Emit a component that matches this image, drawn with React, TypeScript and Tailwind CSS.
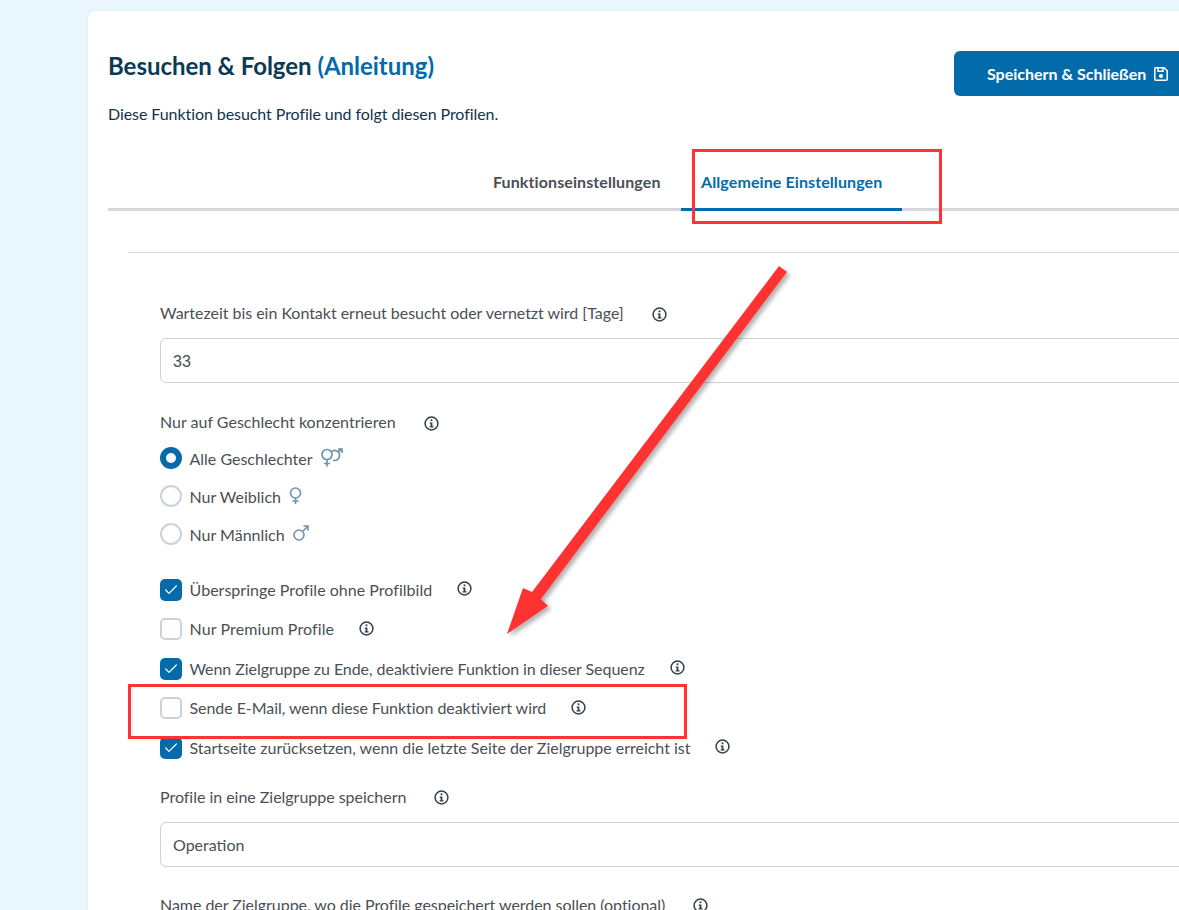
import { Check } from "lucide-react";

function InfoIcon({ shift }: { shift: string }) {
  return (
    <svg width="15" height="15" viewBox="0 0 15 15" fill="none" className={`shrink-0 text-[#333f48] ${shift}`}>
      <circle cx="7.5" cy="7.5" r="6.4" stroke="currentColor" strokeWidth="1.5" />
      <rect x="6.6" y="3.4" width="1.8" height="1.8" fill="currentColor" />
      <path d="M5.7 6.4h2.7v3.8h1.1v1.3H5.6v-1.3h1v-2.5h-.9z" fill="currentColor" />
    </svg>
  );
}

function SaveIcon() {
  return (
    <svg width="16" height="16" viewBox="0 0 16 16" fill="none" stroke="currentColor" strokeWidth="1.5" className="shrink-0">
      <path d="M2.8 1.8h8.4l3 3v8.4a1 1 0 0 1-1 1H2.8a1 1 0 0 1-1-1V2.8a1 1 0 0 1 1-1z" />
      <path d="M5 2v3.2h5V2" />
      <circle cx="8" cy="10" r="1.3" fill="currentColor" />
    </svg>
  );
}

function VenusMarsIcon() {
  return (
    <svg width="22" height="19" viewBox="0 0 22 19" fill="none" stroke="currentColor" strokeWidth="1.7">
      <circle cx="6" cy="6.5" r="5" />
      <path d="M6 11.5v7M3 15.5h6" />
      <path d="M11 3.2a5 5 0 1 1 1 9" />
      <path d="M17 4l4-3.2M17 1h4v4" />
    </svg>
  );
}

function VenusIcon() {
  return (
    <svg width="13" height="17" viewBox="0 0 13 17" fill="none" stroke="currentColor" strokeWidth="1.6">
      <circle cx="6.5" cy="6" r="5" />
      <path d="M6.5 11v6M3.5 14h6" />
    </svg>
  );
}

function MarsIcon() {
  return (
    <svg width="16" height="16" viewBox="0 0 16 16" fill="none" stroke="currentColor" strokeWidth="1.6">
      <circle cx="6" cy="10" r="5" />
      <path d="M9.8 6.2l5-5M10.5 1h4.5v4.5" />
    </svg>
  );
}

function Label({ text, fit = "" }: { text: string; fit?: string }) {
  return (
    <div className={`flex items-center gap-7 text-base leading-5 text-[#4a4f55] ${fit}`}>
      <span>{text}</span>
      <InfoIcon shift="translate-y-px" />
    </div>
  );
}

function Radio({ on, text, icon }: { on?: boolean; text: string; icon: React.ReactNode }) {
  return (
    <div className="flex items-center h-[38px] text-base text-[#4a4f55]">
      <span
        className={`w-[22px] h-[22px] rounded-full bg-white ${
          on ? "border-[6px] border-[#046bab]" : "border-2 border-[#ccd2d7]"
        }`}
      />
      <span className="ml-[7.5px] translate-y-px">{text}</span>
      <span className="ml-2 -translate-y-px text-[#6f93ad]">{icon}</span>
    </div>
  );
}

function CheckRow({ on, text, fit = "" }: { on?: boolean; text: string; fit?: string }) {
  return (
    <div className={`flex items-center h-[39.5px] text-base text-[#4a4f55] ${fit}`}>
      <span
        className={`flex items-center justify-center w-[22px] h-[22px] rounded-[5px] ${
          on ? "bg-[#046bab]" : "bg-white border-2 border-[#ccd2d7]"
        }`}
      >
        {on && <Check size={16} strokeWidth={1.8} className="text-white" />}
      </span>
      <span className="ml-[7.5px]">{text}</span>
      <span className="ml-[25px]">
        <InfoIcon shift="-translate-y-px" />
      </span>
    </div>
  );
}

export default function App() {
  return (
    <div
      className="relative w-[1179px] h-[910px] overflow-hidden bg-[#ebf7fe] pt-[11px] pl-[88px]"
      style={{ fontFamily: "Lato, sans-serif" }}
    >
      <div className="w-[1200px] h-[950px] rounded-lg bg-white pt-[39px] pl-5 shadow-[0_0_4px_rgba(0,0,0,0.06)]">
        {/* Header */}
        <div className="flex items-start justify-between w-[1094px]">
          <div>
            <h1 className="text-2xl leading-8 font-bold tracking-[-0.03px] text-[#0b3a56]">
              Besuchen &amp; Folgen <span className="text-[#046bab]">(Anleitung)</span>
            </h1>
            <p className="mt-[22px] text-base leading-5 tracking-[-0.07px] text-[#12324a]">
              Diese Funktion besucht Profile und folgt diesen Profilen.
            </p>
          </div>
          <button className="flex items-center gap-[7px] w-[248px] h-[45px] mt-px pl-[33px] rounded-md bg-[#046bab] text-base font-bold text-white">
            Speichern &amp; Schließen
            <SaveIcon />
          </button>
        </div>

        {/* Tabs */}
        <div className="flex h-[58px] mt-[29px] pl-[373px] border-b-[3px] border-[#d4d8dc] text-base font-bold tracking-[0.1px]">
          <div className="flex items-center h-[58px] w-[200px] pl-3 text-[#4a4f55]">Funktionseinstellungen</div>
          <div className="flex items-center h-[58px] w-[221px] pl-5 pt-[3px] border-b-[3px] border-[#046bab] text-[#046bab]">
            Allgemeine Einstellungen
          </div>
        </div>

        {/* Settings */}
        <div className="ml-5 mt-[41px] border-t border-[#d9dde0] pl-8">
          <div className="pt-[50px]">
            <Label text="Wartezeit bis ein Kontakt erneut besucht oder vernetzt wird [Tage]" fit="tracking-[-0.03px]" />
          </div>
          <div
            className="flex items-center h-[45px] mt-[15px] px-3 pt-[2px] rounded-md border border-[#ccd2d7] text-base text-[#4a4f55]"
            style={{ fontFamily: "'Liberation Sans', sans-serif" }}
          >
            33
          </div>

          <div className="mt-[29px]">
            <Label text="Nur auf Geschlecht konzentrieren" />
          </div>
          <div className="mt-[7px]">
            <Radio on text="Alle Geschlechter" icon={<VenusMarsIcon />} />
            <Radio text="Nur Weiblich" icon={<VenusIcon />} />
            <Radio text="Nur Männlich" icon={<MarsIcon />} />
          </div>

          <div className="mt-[17px]">
            <CheckRow on text="Überspringe Profile ohne Profilbild" fit="tracking-[0.03px]" />
            <CheckRow text="Nur Premium Profile" fit="tracking-[0.1px]" />
            <CheckRow on text="Wenn Zielgruppe zu Ende, deaktiviere Funktion in dieser Sequenz" fit="tracking-[-0.06px]" />
            <CheckRow text="Sende E-Mail, wenn diese Funktion deaktiviert wird" fit="tracking-[-0.06px]" />
            <CheckRow on text="Startseite zurücksetzen, wenn die letzte Seite der Zielgruppe erreicht ist" fit="tracking-[-0.02px]" />
          </div>

          <div className="mt-[19px]">
            <Label text="Profile in eine Zielgruppe speichern" fit="tracking-[-0.03px]" />
          </div>
          <div className="flex items-center h-[45px] mt-[15px] px-3 pt-px rounded-md border border-[#ccd2d7] text-base text-[#4a4f55]">
            Operation
          </div>
          <div className="mt-[28px]">
            <Label text="Name der Zielgruppe, wo die Profile gespeichert werden sollen (optional)" fit="tracking-[-0.04px]" />
          </div>
        </div>
      </div>

      {/* Annotations drawn on top of the screenshot */}
      <div className="absolute left-[692px] top-[149px] w-[250px] h-[75px] border-[3px] border-[#ff3333]" />
      <div className="absolute left-[128px] top-[684px] w-[559px] h-[55px] border-[3px] border-[#ff3333]" />
      <svg className="absolute left-0 top-0 pointer-events-none" width="1179" height="910" viewBox="0 0 1179 910">
        <defs>
          <filter id="arrowShadow" x="-20%" y="-20%" width="140%" height="140%">
            <feDropShadow dx="3" dy="3" stdDeviation="2" floodColor="#000" floodOpacity="0.3" />
          </filter>
        </defs>
        <path
          d="M779 266 L787 272 L541 599 L548 606 L507 634 L523 588 L532 592 Z"
          fill="#ff3333"
          filter="url(#arrowShadow)"
        />
      </svg>
    </div>
  );
}
